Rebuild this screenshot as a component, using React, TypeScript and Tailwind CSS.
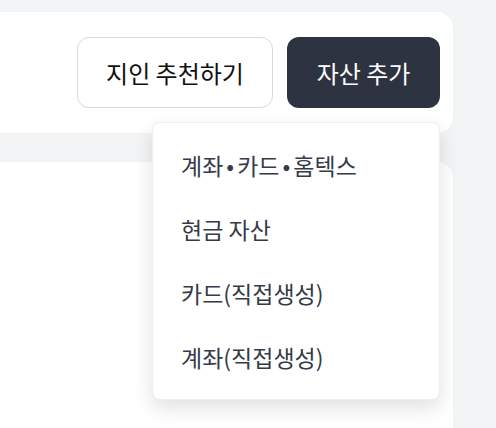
import React from "react";

const items: React.ReactNode[] = [
  <>
    계좌<span className="mx-[3px]">•</span>카드<span className="mx-[3px]">•</span>홈텍스
  </>,
  "현금 자산",
  "카드(직접생성)",
  "계좌(직접생성)",
];

export default function App() {
  return (
    <div
      className="min-h-screen w-full bg-[#f3f4f6] pt-3 pr-[43px] flex flex-col"
      style={{ fontFamily: '"Noto Sans CJK KR", "Noto Sans", sans-serif' }}
    >
      <div className="h-[121px] bg-white rounded-r-2xl flex items-center justify-end gap-[14px] pr-[13px]">
        <button className="h-[71px] w-[196px] rounded-xl border border-[#d6d8de] bg-white text-[24px] text-[#111111] flex items-center justify-center">
          지인 추천하기
        </button>
        <div className="relative">
          <button className="h-[71px] w-[153px] rounded-xl bg-[#2d3340] text-[24px] text-white flex items-center justify-center">
            자산 추가
          </button>
          <div className="absolute right-0 top-[85px] z-10 w-[288px] rounded-lg border border-[#eceef1] bg-white py-[10px] shadow-[0_8px_20px_rgba(0,0,0,0.12)]">
            {items.map((t, i) => (
              <div key={i} className="h-16 flex items-center pl-7 text-[23px] text-[#353b48]">
                {t}
              </div>
            ))}
          </div>
        </div>
      </div>
      <div className="mt-[29px] flex-1 bg-white rounded-tr-2xl min-h-[266px]" />
    </div>
  );
}
